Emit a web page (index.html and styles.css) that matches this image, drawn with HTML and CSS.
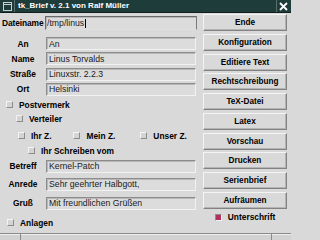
FILE: index.html
```html
<!DOCTYPE html>
<html>
<head>
<meta charset="utf-8">
<link rel="stylesheet" href="styles.css">
</head>
<body>
<div class="window">
  <div class="titlebar">
    <div class="tb-icon"><svg width="9" height="9" viewBox="0 0 9 9"><rect x="0.5" y="0.5" width="8" height="8" fill="none" stroke="#c8d0d0" stroke-width="1"/><line x1="0.5" y1="2.5" x2="8.5" y2="2.5" stroke="#c8d0d0" stroke-width="1"/></svg></div>
    <div class="tb-sep"></div>
    <div class="tb-title">tk_Brief v. 2.1 von Ralf Müller</div>
    <div class="tb-sep"></div>
    <div class="tb-close"><svg width="9" height="9" viewBox="0 0 9 9"><path d="M1 1 L8 8 M8 1 L1 8" stroke="#ffffff" stroke-width="1.8" fill="none"/></svg></div>
  </div>
  <div class="main">
    <div class="form">
      <div class="row r-datei">
        <span class="lbl lbl-datei">Dateiname</span>
        <div class="entry focus">/tmp/linus<span class="cursor"></span></div>
      </div>
      <div class="row r-an">
        <span class="lbl">An</span>
        <div class="entry">An</div>
      </div>
      <div class="row r-addr">
        <span class="lbl">Name</span>
        <div class="entry">Linus Torvalds</div>
      </div>
      <div class="row r-addr">
        <span class="lbl">Straße</span>
        <div class="entry">Linuxstr. 2.2.3</div>
      </div>
      <div class="row r-addr">
        <span class="lbl">Ort</span>
        <div class="entry">Helsinki</div>
      </div>
      <div class="crow c-post"><span class="cb"></span><span class="ctext">Postvermerk</span></div>
      <div class="crow c-vert"><span class="cb"></span><span class="ctext">Verteiler</span></div>
      <div class="crow c-z">
        <span class="cz cz1"><span class="cb"></span><span class="ctext">Ihr Z.</span></span>
        <span class="cz cz2"><span class="cb"></span><span class="ctext">Mein Z.</span></span>
        <span class="cz cz3"><span class="cb"></span><span class="ctext">Unser Z.</span></span>
      </div>
      <div class="crow c-schr"><span class="cb"></span><span class="ctext">Ihr Schreiben vom</span></div>
      <div class="row r-betr">
        <span class="lbl">Betreff</span>
        <div class="entry">Kernel-Patch</div>
      </div>
      <div class="row r-anr">
        <span class="lbl">Anrede</span>
        <div class="entry">Sehr geehrter Halbgott,</div>
      </div>
      <div class="row r-gruss">
        <span class="lbl">Gruß</span>
        <div class="entry">Mit freundlichen Grüßen</div>
      </div>
      <div class="crow c-anl"><span class="cb"></span><span class="ctext">Anlagen</span></div>
    </div>
    <div class="buttons">
      <div class="btn">Ende</div>
      <div class="btn">Konfiguration</div>
      <div class="btn">Editiere Text</div>
      <div class="btn">Rechtschreibung</div>
      <div class="btn">TeX-Datei</div>
      <div class="btn">Latex</div>
      <div class="btn">Vorschau</div>
      <div class="btn">Drucken</div>
      <div class="btn">Serienbrief</div>
      <div class="btn">Aufräumen</div>
      <div class="crow c-unter"><span class="cb on"></span><span class="ctext">Unterschrift</span></div>
    </div>
  </div>
  <div class="bottom">
    <div class="bcell b1"></div>
    <div class="bcell b2"></div>
    <div class="bcell b3"></div>
  </div>
</div>
</body>
</html>
```
FILE: styles.css
```css
html, body {
  margin: 0;
  padding: 0;
}
body {
  background: #d9d9d9;
  font-family: "Liberation Sans", Arial, sans-serif;
}
.window {
  width: 291px;
  height: 240px;
  background: #d9d9d9;
  display: flex;
  flex-direction: column;
  overflow: hidden;
}
.titlebar {
  height: 13px;
  box-sizing: border-box;
  background: #1e3c3a;
  border-bottom: 1px solid #0f1f1e;
  display: flex;
  align-items: center;
  color: #fff;
  flex: none;
}
.tb-icon {
  width: 9px;
  height: 9px;
  margin-left: 3px;
  display: flex;
}
.tb-sep {
  width: 1px;
  height: 12px;
  background: #5a6e6e;
  margin-left: 2px;
}
.tb-title {
  font-weight: bold;
  font-size: 8px;
  margin-left: 3px;
  flex: 1;
  line-height: 12px;
  white-space: nowrap;
}
.tb-close {
  width: 9px;
  height: 9px;
  margin: 0 3px 0 2px;
  display: flex;
}
.main {
  height: 220px;
  display: flex;
  flex: none;
}
.form {
  width: 197px;
  display: flex;
  flex-direction: column;
}
.row {
  display: flex;
  align-items: center;
  height: 13px;
  flex: none;
}
.lbl {
  width: 46px;
  text-align: center;
  font-weight: bold;
  font-size: 8.4px;
  color: #000;
  flex: none;
  white-space: nowrap;
}
.lbl-datei {
  width: 45px;
  text-align: left;
  padding-left: 2px;
  box-sizing: border-box;
  letter-spacing: -0.1px;
}
.entry {
  flex: 1;
  height: 100%;
  box-sizing: border-box;
  border-top: 1px solid #8c8c8c;
  border-left: 1px solid #8c8c8c;
  border-bottom: 1px solid #f2f2f2;
  border-right: 1px solid #f2f2f2;
  box-shadow: inset 1px 1px 0 #b8b8b8;
  background: #dcdcdc;
  font-size: 8.7px;
  color: #1a1a1a;
  padding-left: 2px;
  display: flex;
  align-items: center;
  white-space: nowrap;
  overflow: hidden;
  margin-right: 1px;
}
.entry.focus {
  margin-right: 0;
  border-top-color: #6a6a6a;
  border-left-color: #6a6a6a;
  border-right-color: #7a7a7a;
  border-bottom-color: #e0e0e0;
  padding-left: 1px;
}
.cursor {
  display: inline-block;
  width: 1px;
  height: 9px;
  background: #000;
  margin-left: 1px;
}
.r-datei { height: 14px; margin-top: 3px; }
.r-an { margin-top: 7px; }
.r-addr { margin-top: 2.3px; }
.r-betr { margin-top: 4px; }
.r-anr { margin-top: 5px; }
.r-gruss { margin-top: 6px; }

.crow {
  display: flex;
  align-items: center;
  height: 10px;
  flex: none;
}
.cb {
  width: 5px;
  height: 5px;
  flex: none;
  background: #d4d4d4;
  border-top: 1px solid #f4f4f4;
  border-left: 1px solid #f4f4f4;
  border-bottom: 1px solid #8c8c8c;
  border-right: 1px solid #8c8c8c;
}
.cb.on {
  background: #b03060;
  border-top-color: #8c8c8c;
  border-left-color: #8c8c8c;
  border-bottom-color: #f4f4f4;
  border-right-color: #f4f4f4;
}
.ctext {
  font-weight: bold;
  font-size: 8.4px;
  color: #000;
  margin-left: 6px;
  white-space: nowrap;
}
.c-post { margin-top: 4.1px; padding-left: 6px; }
.c-vert { margin-top: 4px; padding-left: 16px; }
.c-z { margin-top: 7px; padding-left: 18px; }
.cz { display: flex; align-items: center; }
.cz2 { margin-left: 22px; }
.cz3 { margin-left: 25px; }
.c-schr { margin-top: 5px; padding-left: 28px; }
.c-anl { margin-top: 8px; padding-left: 7px; }

.buttons {
  width: 84px;
  margin-left: 6px;
  display: flex;
  flex-direction: column;
  gap: 2.75px;
  padding-top: 1px;
}
.btn {
  height: 17px;
  box-sizing: border-box;
  flex: none;
  border-top: 1px solid #f4f4f4;
  border-left: 1px solid #f4f4f4;
  border-bottom: 1px solid #828282;
  border-right: 1px solid #828282;
  box-shadow: inset -1px -1px 0 #b4b4b4;
  background: #d9d9d9;
  font-weight: bold;
  font-size: 8.2px;
  color: #000;
  display: flex;
  align-items: center;
  justify-content: center;
  white-space: nowrap;
}
.c-unter {
  justify-content: center;
  margin-top: 0.75px;
}
.bottom {
  flex: 1;
  display: flex;
  border-top: 1px solid #8a8a8a;
  box-shadow: inset 0 1px 0 #efefef;
  background: #d2d2d2;
}
.bcell {
  height: 100%;
}
.b1 { width: 20px; border-right: 1px solid #8a8a8a; }
.b2 { flex: 1; border-right: 1px solid #8a8a8a; }
.b3 { width: 19px; }
```
